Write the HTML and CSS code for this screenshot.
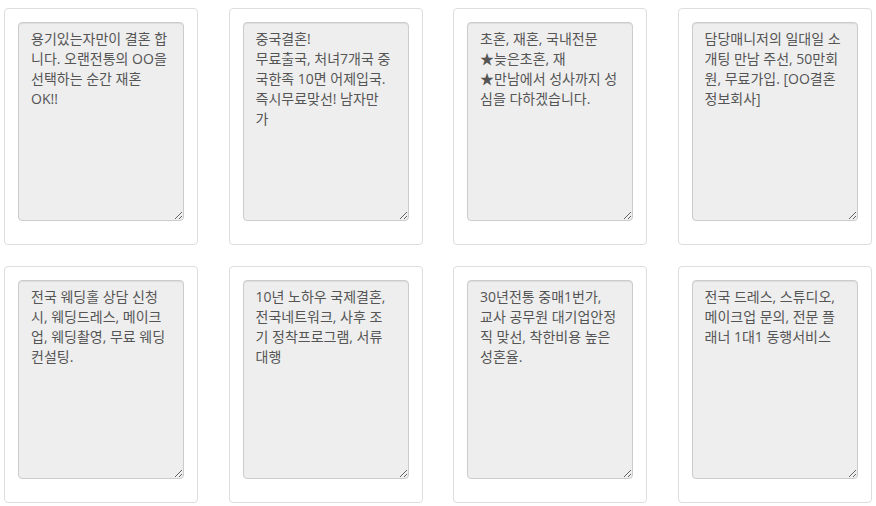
FILE: index.html
```html
<!DOCTYPE html>
<html lang="ko">
<head>
    <meta charset="UTF-8">
    <meta name="viewport" content="width=device-width, initial-scale=1.0">
    <title>광고 문구</title>
    <link rel="stylesheet" href="styles.css">
</head>
<body>
    <div class="ad-grid">
        <div class="ad-card">
            <textarea class="ad-text" wrap="off" readonly>용기있는자만이 결혼 합
니다. 오랜전통의 OO을
선택하는 순간 재혼
OK!!</textarea>
        </div>
        <div class="ad-card">
            <textarea class="ad-text" wrap="off" readonly>중국결혼!
무료출국, 처녀7개국 중
국한족 10면 어제입국.
즉시무료맞선! 남자만
가</textarea>
        </div>
        <div class="ad-card">
            <textarea class="ad-text" wrap="off" readonly>초혼, 재혼, 국내전문
★늦은초혼, 재
★만남에서 성사까지 성
심을 다하겠습니다.</textarea>
        </div>
        <div class="ad-card">
            <textarea class="ad-text" wrap="off" readonly>담당매니저의 일대일 소
개팅 만남 주선, 50만회
원, 무료가입. [OO결혼
정보회사]</textarea>
        </div>
        <div class="ad-card">
            <textarea class="ad-text" wrap="off" readonly>전국 웨딩홀 상담 신청
시, 웨딩드레스, 메이크
업, 웨딩촬영, 무료 웨딩
컨설팅.</textarea>
        </div>
        <div class="ad-card">
            <textarea class="ad-text" wrap="off" readonly>10년 노하우 국제결혼,
전국네트워크, 사후 조
기 정착프로그램, 서류
대행</textarea>
        </div>
        <div class="ad-card">
            <textarea class="ad-text" wrap="off" readonly>30년전통 중매1번가,
교사 공무원 대기업안정
직 맞선, 착한비용 높은
성혼율.</textarea>
        </div>
        <div class="ad-card">
            <textarea class="ad-text" wrap="off" readonly>전국 드레스, 스튜디오,
메이크업 문의, 전문 플
래너 1대1 동행서비스</textarea>
        </div>
    </div>
</body>
</html>
```

FILE: styles.css
```css
body {
    margin: 0;
    background: #fff;
    font-family: "Open Sans", "Noto Sans CJK KR", sans-serif;
}
.ad-grid {
    display: grid;
    grid-template-columns: repeat(4, 194px);
    column-gap: 30.5px;
    row-gap: 21px;
    padding: 8px 0 0 4px;
}
.ad-card {
    border: 1px solid #ddd;
    border-radius: 4px;
    padding: 13px 13px 23px;
    background: #fff;
}
.ad-text {
    display: block;
    box-sizing: border-box;
    width: 100%;
    height: 199px;
    margin: 0;
    padding: 6px 12px;
    border: 1px solid #ccc;
    border-radius: 4px;
    background: #eee;
    box-shadow: inset 0 1px 1px rgba(0, 0, 0, 0.075);
    color: #555;
    font-family: inherit;
    font-size: 14px;
    line-height: 20px;
    overflow: hidden;
    resize: vertical;
}
.ad-text:focus {
    outline: none;
}
```
